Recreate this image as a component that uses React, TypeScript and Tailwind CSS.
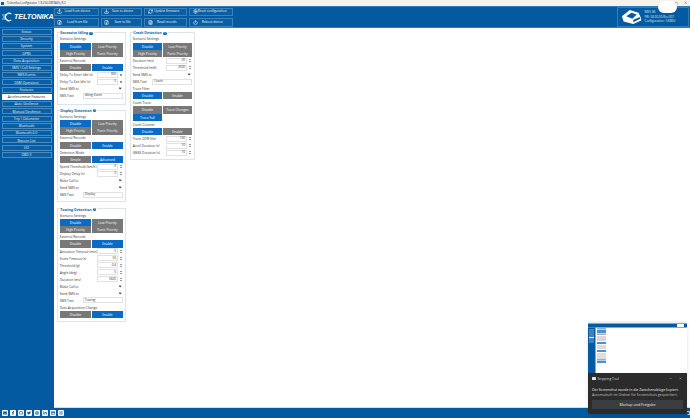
import React from "react";
import { Upload, Download, RefreshCw, Settings, FileUp, FileDown, FileText, Power, Minus, Square, X } from "lucide-react";
import { FaFacebookF, FaTwitter, FaLinkedinIn, FaEnvelope, FaGithub, FaGlobe, FaImage, FaInstagram } from "react-icons/fa";

const side = ["Status","Security","System","GPRS","Data Acquisition","SMS \\ Call Settings","SMS Events","GSM Operators","Features","Accelerometer Features","Auto Geofence","Manual Geofence","Trip \\ Odometer","Bluetooth","Bluetooth 4.0","Beacon List","I/O","OBD II"];

function Label({ t }: { t: string }) {
  return <div className="h-[7px] flex items-center text-[3.3px] leading-none text-[#333]">{t}</div>;
}
function Btns({ items, active }: { items: string[]; active: number[] }) {
  return (
    <div className="grid grid-cols-2 gap-x-[0.5px]">
      {items.map((t, i) => (
        <div key={t} className={`h-[7.3px] flex items-center justify-center text-[3.3px] leading-none text-white ${active.includes(i) ? "bg-[#0a6bc4]" : "bg-[#787878]"}`}>{t}</div>
      ))}
    </div>
  );
}
const scenario = ["Disable","Low Priority","High Priority","Panic Priority"];
function Num({ t, v }: { t: string; v: string }) {
  return (
    <div className="h-[7px] flex items-center text-[3.3px] leading-none text-[#333]">
      <span className="flex-1 whitespace-nowrap">{t}</span>
      <span className="w-[21px] h-[6px] border-[0.5px] border-[#e2e2e2] flex items-center justify-end pr-[1px] text-[3.2px]">{v}</span>
      <span className="w-[5px] flex flex-col items-center gap-[0.6px]">
        <span className="w-0 h-0 border-x-[1px] border-x-transparent border-b-[1.6px] border-b-[#333]" />
        <span className="w-0 h-0 border-x-[1px] border-x-transparent border-t-[1.6px] border-t-[#333]" />
      </span>
    </div>
  );
}
function Sel({ t, narrow }: { t: string; narrow?: boolean }) {
  return (
    <div className="h-[7px] flex items-center text-[3.3px] leading-none text-[#333]">
      <span className="flex-1 whitespace-nowrap">{t}</span>
      <span className={`h-[6px] flex items-center justify-end pr-[1.5px] ${narrow ? "w-[40px]" : "w-[40.5px]"}`}>
        <span className="w-[2.4px] h-[2.4px] border-r-[0.6px] border-b-[0.6px] border-[#444] rotate-45 -mt-[1px]" />
      </span>
    </div>
  );
}
function Txt({ t, v }: { t: string; v: string }) {
  return (
    <div className="h-[7px] flex items-center text-[3.3px] leading-none text-[#333]">
      <span className="flex-1 whitespace-nowrap">{t}</span>
      <span className="w-[40.5px] h-[6px] border-[0.5px] border-[#e2e2e2] flex items-center pl-[1px] text-[3.2px]">{v}</span>
    </div>
  );
}
function Card({ title, cls, children }: { title: string; cls: string; children: React.ReactNode }) {
  return (
    <div className={`border-[0.7px] border-[#dce5ec] px-[2px] ${cls}`}>
      <div className="-mt-[2px] h-[4.5px] w-fit bg-white pl-[0.5px] pr-[1px] flex items-center gap-[1.2px] text-[3.6px] leading-none font-bold text-[#0a5fa4] whitespace-nowrap">
        {title}
        <span className="w-[3.4px] h-[3.4px] rounded-full bg-[#0a5fa4] text-white text-[2.6px] flex items-center justify-center">i</span>
      </div>
      {children}
    </div>
  );
}
function HBtn({ Icon, t, w }: { Icon: React.ElementType; t: string; w: string }) {
  return (
    <div className={`h-[8.5px] ${w} border-[0.6px] border-[#3c82b8] bg-[#0a5fa4] flex items-center pl-[2.5px] pr-[5px] text-[3.2px] leading-none text-[#e8f0f7] whitespace-nowrap`}>
      <Icon className="w-[5px] h-[5px] text-white shrink-0" strokeWidth={2.5} />
      <span className="flex-1 text-center">{t}</span>
    </div>
  );
}

export default function App() {
  return (
    <div className="relative w-[690px] h-[418px] overflow-hidden flex flex-col bg-white" style={{ fontFamily: '"Open Sans", "Liberation Sans", sans-serif' }}>
      <div className="h-[6px] bg-[#f5f1eb] flex items-center pl-[1px] text-[2.9px] leading-none text-[#333]">
        <span className="w-[3px] h-[3px] bg-[#0a5fa4] mr-[3px]" />
        Teltonika.Configurator 1.8.254.0809Alfa_R.2
        <span className="ml-auto flex items-center gap-[6px] pr-[3px]">
          <Minus className="w-[3.5px] h-[3.5px]" /><Square className="w-[3px] h-[3px]" /><X className="w-[3.5px] h-[3.5px]" />
        </span>
      </div>

      <div className="h-[22px] bg-[#045aa0] border-y-[0.7px] border-[#2f7cb6] flex items-center">
        <div className="w-[53.5px] h-full flex items-center pl-[2px]">
          <svg viewBox="0 0 16 12" className="w-[13px] h-[10px] shrink-0" fill="none" stroke="white" strokeWidth="1.4">
            <path d="M11.5 2.5 A4.5 4.5 0 1 0 11.5 9.5" />
            <path d="M0 3.5 L6 3.5 M1 6 L5 6 M0 8.5 L6 8.5" strokeWidth="0.9" />
          </svg>
          <span className="-ml-[1px] text-[7.2px] leading-none font-bold italic text-white tracking-[-0.1px]" style={{ fontFamily: '"Liberation Sans", sans-serif' }}>TELTONIKA</span>
        </div>
        <div className="grid grid-cols-[45px_41.5px_43px_44px] gap-x-[2px] gap-y-[2px]">
          <HBtn Icon={Upload} t="Load from device" w="w-[45px]" />
          <HBtn Icon={Download} t="Save to device" w="w-[41.5px]" />
          <HBtn Icon={RefreshCw} t="Update firmware" w="w-[43px]" />
          <HBtn Icon={Settings} t="Reset configuration" w="w-[44px]" />
          <HBtn Icon={FileUp} t="Load from file" w="w-[45px]" />
          <HBtn Icon={FileDown} t="Save to file" w="w-[41.5px]" />
          <HBtn Icon={FileText} t="Read records" w="w-[43px]" />
          <HBtn Icon={Power} t="Reboot device" w="w-[44px]" />
        </div>
        <div className="ml-auto mr-[1px] w-[72px] h-[20px] border-[0.6px] border-[#2f7cb6] flex items-center pl-[3px] gap-[2.5px]">
          <svg viewBox="0 0 24 18" className="w-[21px] h-[16px] shrink-0" fill="white">
            <path d="M1 8 L10 1 L20 4 L23 10 L23 13 L14 17 L3 14 Z" />
            <path d="M6 8 L12 4 L18 6 L13 11 Z M14 12 L22 9 L22 11 L14 15 Z" fill="#045aa0" />
          </svg>
          <div className="text-[3px] leading-[4.4px] text-[#dfeaf3] whitespace-nowrap">
            <div>IMEI: 86</div>
            <div>FW: 04.00.00.Rev.007</div>
            <div>Configuration: 140862</div>
          </div>
        </div>
      </div>

      <div className="flex-1 flex min-h-0">
        <div className="w-[54px] bg-[#045aa0] pt-[0.5px] pl-[1.5px] flex flex-col gap-[1.25px]">
          {side.map((s) => (
            <div key={s} className={`w-[50px] h-[6px] flex items-center justify-center text-[3.4px] leading-none whitespace-nowrap border-[0.5px] ${s === "Accelerometer Features" ? "bg-white text-[#222] border-white" : "bg-[#0a5fa4] text-[#e3edf5] border-[#4a8cc0]"}`}>{s}</div>
          ))}
        </div>

        <div className="flex-1 flex gap-[3.5px] pl-[2.7px] pt-[4px] border-b-[0.7px] border-[#d5dde4]">
          <div className="w-[69.5px] flex flex-col">
            <Card title="Excessive Idling" cls="h-[73px] mb-[4.5px]">
              <Label t="Scenario Settings" />
              <Btns items={scenario} active={[0]} />
              <Label t="External Records" />
              <Btns items={["Disable","Enable"]} active={[1]} />
              <Num t="Delay To Enter Idle (s)" v="300" />
              <Num t="Delay To Exit Idle (s)" v="5" />
              <Sel t="Send SMS to" />
              <Txt t="SMS Text" v="Idling Event" />
            </Card>
            <Card title="Display Detection" cls="h-[92.3px] mb-[6.6px]">
              <Label t="Scenario Settings" />
              <Btns items={scenario} active={[0]} />
              <Label t="External Records" />
              <Btns items={["Disable","Enable"]} active={[1]} />
              <Label t="Detection Mode" />
              <Btns items={["Simple","Advanced"]} active={[1]} />
              <Num t="Speed Threshold (km/h)" v="0" />
              <Num t="Display Delay (s)" v="0" />
              <Sel t="Make Call to" />
              <Sel t="Send SMS to" />
              <Txt t="SMS Text" v="Display" />
            </Card>
            <Card title="Towing Detection" cls="h-[113.5px]">
              <Label t="Scenario Settings" />
              <Btns items={scenario} active={[0]} />
              <Label t="External Records" />
              <Btns items={["Disable","Enable"]} active={[1]} />
              <Num t="Activation Timeout (min)" v="5" />
              <Num t="Event Timeout (s)" v="50" />
              <Num t="Threshold (g)" v="0.4" />
              <Num t="Angle (deg)" v="5" />
              <Num t="Duration (ms)" v="5600" />
              <Sel t="Make Call to" />
              <Sel t="Send SMS to" />
              <Txt t="SMS Text" v="Towing" />
              <Label t="Data Acquisition Change" />
              <Btns items={["Disable","Enable"]} active={[1]} />
            </Card>
          </div>
          <div className="w-[65.5px]">
            <Card title="Crash Detection" cls="h-[128px]">
              <Label t="Scenario Settings" />
              <Btns items={scenario} active={[0]} />
              <Num t="Duration (ms)" v="20" />
              <Num t="Threshold (mG)" v="2500" />
              <Sel t="Send SMS to" narrow />
              <div className="h-[7px] flex items-center text-[3.3px] leading-none text-[#333]">
                <span className="flex-1">SMS Text</span>
                <span className="w-[40px] h-[6px] border-[0.5px] border-[#e2e2e2] flex items-center pl-[1px] text-[3.2px]">Crash</span>
              </div>
              <Label t="Trace Filter" />
              <Btns items={["Disable","Enable"]} active={[0]} />
              <Label t="Crash Trace" />
              <Btns items={["Disable","Trace Changes","Trace Full"]} active={[2]} />
              <Label t="Crash Counter" />
              <Btns items={["Disable","Enable"]} active={[0]} />
              <Num t="Trace ODR (Hz)" v="100" />
              <Num t="Accel Duration (s)" v="10" />
              <Num t="GNSS Duration (s)" v="10" />
            </Card>
          </div>
        </div>
      </div>

      <div className="h-[10px] bg-[#045aa0] flex items-center pl-[1.5px] gap-[2px]">
        {[FaEnvelope, FaFacebookF, FaGithub, FaTwitter, FaGlobe, FaLinkedinIn, FaImage, FaInstagram].map((I, i) => (
          <span key={i} className="w-[6px] h-[6px] bg-white rounded-[1px] flex items-center justify-center text-[#045aa0]">
            <I className="w-[4px] h-[4px]" />
          </span>
        ))}
      </div>

      <div className="absolute left-[658px] top-[1px] w-[19px] h-[12px] rounded-full bg-white" />
      <svg viewBox="0 0 10 10" className="absolute right-[0.5px] bottom-[3px] w-[4px] h-[4px]" fill="none" stroke="white" strokeWidth="2"><path d="M1 1H9V9H4" /></svg>

      <div className="absolute left-[588px] top-[321px] w-[99px] h-[93px] rounded-[2px] overflow-hidden flex flex-col shadow-md">
        <svg viewBox="0 0 99 52" className="w-[99px] h-[52px] shrink-0 block">
          <rect width="99" height="52" fill="#ffffff" />
          <rect y="0" width="99" height="2.5" fill="#eef1f4" />
          <rect y="2.5" width="99" height="4" fill="#045aa0" />
          <rect y="6.5" width="7.5" height="45.5" fill="#045aa0" />
          <rect x="1" y="8" width="5" height="14" fill="#3d82b8" />
          <rect x="1" y="16" width="5" height="1" fill="#ffffff" />
          <rect x="9" y="7.5" width="9" height="0.8" fill="#0a6bc4" />
          <rect x="9" y="9" width="9" height="3" fill="#4c90cf" />
          <rect x="9" y="12.5" width="9" height="1.5" fill="#aaaaaa" />
          <rect x="9" y="15" width="9" height="5" fill="#d8d8d8" />
          <rect x="9" y="21" width="9" height="2" fill="#4c90cf" />
          <rect x="9" y="24" width="9" height="4" fill="#dddddd" />
          <rect x="9" y="29" width="9" height="2" fill="#4c90cf" />
          <rect x="9" y="32" width="9" height="6" fill="#dddddd" />
          <rect x="9" y="38.5" width="9" height="0.8" fill="#0a6bc4" />
          <rect x="9" y="40" width="9" height="2" fill="#4c90cf" />
          <rect x="89" y="3" width="7" height="3" fill="#ffffff" />
        </svg>
        <div className="flex-1 bg-[#2b2b2b] px-[4px] pt-[3px] text-white flex flex-col">
          <div className="h-[5px] flex items-center gap-[2px] text-[3.4px] leading-none text-[#dddddd]">
            <span className="w-[3.5px] h-[3.5px] bg-[#d8e6f2] rounded-[0.5px]" />
            Snipping Tool
            <span className="ml-auto flex items-center gap-[7px] pr-[1px]">
              <Minus className="w-[3px] h-[3px]" /><X className="w-[3px] h-[3px]" />
            </span>
          </div>
          <div className="mt-[6px] text-[3.5px] leading-[5px] whitespace-nowrap text-[#eeeeee]">Der Screenshot wurde in die Zwischenablage kopiert.</div>
          <div className="text-[3.5px] leading-[5px] whitespace-nowrap text-[#c0c0c0]">Automatisch im Ordner für Screenshots gespeichert.</div>
          <div className="mt-[3px] h-[9px] rounded-[1px] bg-[#3a3d40] flex items-center justify-center text-[3.6px] leading-none text-[#eeeeee]">Markup und Freigabe</div>
        </div>
      </div>
    </div>
  );
}
